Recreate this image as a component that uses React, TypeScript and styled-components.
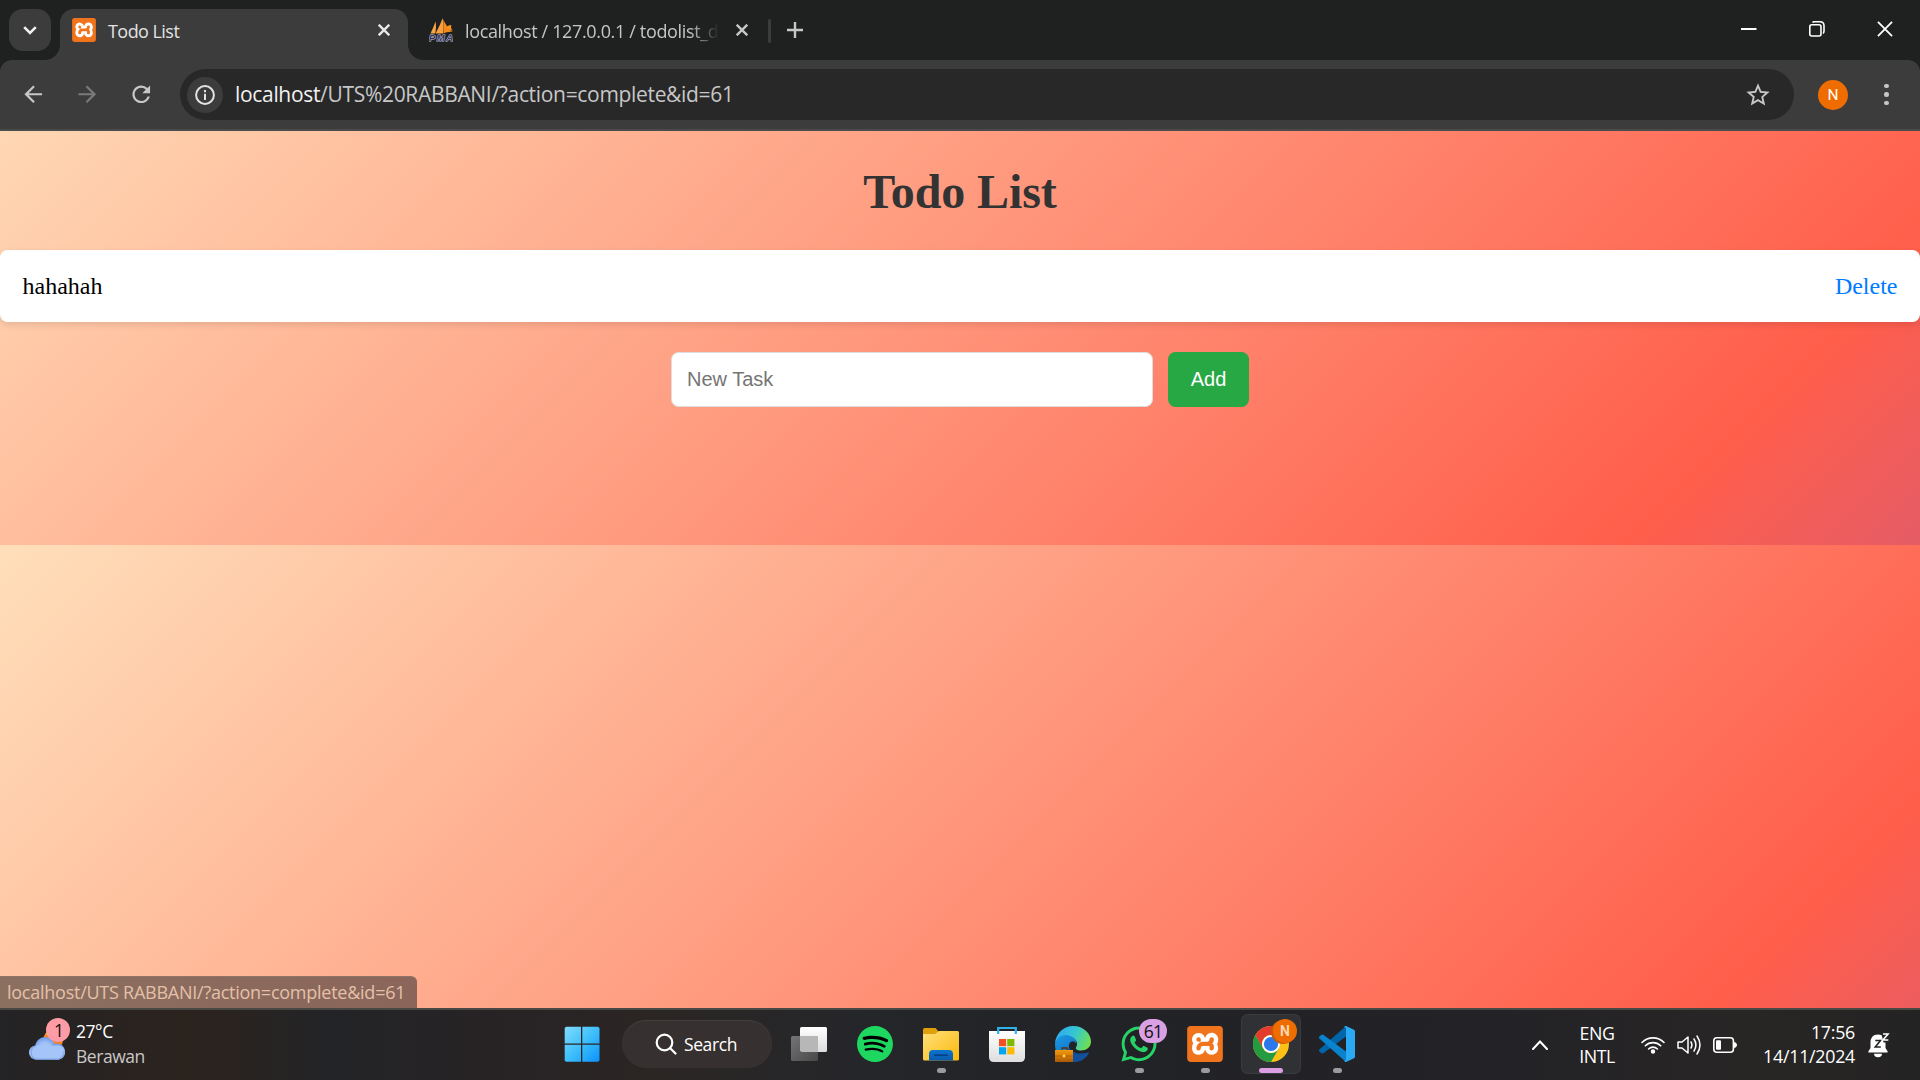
import React from "react";
import styled, { createGlobalStyle, css } from "styled-components";
import { SiXampp, SiSpotify } from "react-icons/si";
import { FaWhatsapp } from "react-icons/fa";
import { MdRefresh, MdArrowBack, MdArrowForward, MdStarBorder } from "react-icons/md";

const GlobalStyle = createGlobalStyle`
  * { box-sizing: border-box; }
  body { margin: 0; background: #242325; }
`;

const uiFont = css`
  font-family: "Open Sans", "Noto Sans", sans-serif;
  white-space: nowrap;
`;

const Screen = styled.div`
  width: 1920px;
  height: 1080px;
  overflow: hidden;
  display: flex;
  flex-direction: column;
`;

/* ---------- browser chrome ---------- */

const TabStrip = styled.div`
  height: 60px;
  flex: none;
  display: flex;
  align-items: flex-start;
  padding: 9px 0 0 9px;
  background: #1f2120;
`;

const TabSearch = styled.button`
  width: 42px;
  height: 42px;
  padding: 0;
  border: 0;
  border-radius: 14px;
  background: #3c3c3c;
  display: grid;
  place-items: center;
`;

const Tab = styled.div<{ $active?: boolean }>`
  position: relative;
  height: 51px;
  width: ${(p) => (p.$active ? 348 : 358)}px;
  margin-left: ${(p) => (p.$active ? 9 : 0)}px;
  padding: 0 ${(p) => (p.$active ? 18 : 18)}px 9px ${(p) => (p.$active ? 12 : 21)}px;
  display: flex;
  align-items: center;
  border-radius: 14px 14px 0 0;
  background: ${(p) => (p.$active ? "#3c3c3c" : "transparent")};
  svg:last-child { flex: none; margin-left: auto; }

  &::before,
  &::after {
    content: "";
    display: ${(p) => (p.$active ? "block" : "none")};
    position: absolute;
    bottom: 0;
    width: 15px;
    height: 15px;
  }
  &::before {
    left: -15px;
    background: radial-gradient(circle at 0 0, transparent 14.5px, #3c3c3c 15.2px);
  }
  &::after {
    right: -15px;
    background: radial-gradient(circle at 100% 0, transparent 14.5px, #3c3c3c 15.2px);
  }
`;

const TabTitle = styled.span<{ $spacing: number; $fade?: boolean }>`
  ${uiFont}
  flex: none;
  margin-left: 12px;
  padding-top: 2px;
  font-size: 18px;
  line-height: 24px;
  letter-spacing: ${(p) => p.$spacing}px;
  color: ${(p) => (p.$fade ? "#c4c7c5" : "#e3e3e3")};
  ${(p) => p.$fade && "mask-image: linear-gradient(to right, #000 225px, transparent 254px);"}
`;

const TabDivider = styled.i`
  width: 3px;
  height: 24px;
  margin: 10px 16px 0 2px;
  border-radius: 2px;
  background: #3c3c3c;
`;

const NewTab = styled.div`
  margin-top: 13px;
  display: flex;
`;

const WindowControls = styled.div`
  margin-left: auto;
  margin-top: 12px;
  padding-right: 27px;
  display: flex;
  align-items: center;
  gap: 52px;
`;

const ToolbarBack = styled.div`
  flex: none;
  height: 71px;
  background: #1f2120;
`;

const Toolbar = styled.div`
  height: 71px;
  padding: 0 22px 0 21px;
  display: flex;
  align-items: center;
  border-radius: 12px 12px 0 0;
  border-bottom: 2px solid #4a4b4a;
  background: #3c3c3c;
`;

const NavButton = styled.span<{ $dim?: boolean }>`
  width: 24px;
  height: 24px;
  margin-right: 30px;
  display: flex;
  align-items: center;
  justify-content: center;
  font-size: 26.5px;
  color: ${(p) => (p.$dim ? "#7a7a7a" : "#c7c7c7")};
  svg { flex: none; }
`;

const Omnibox = styled.div`
  width: 1614px;
  height: 51px;
  margin-left: -3px;
  padding: 0 22px 0 7px;
  display: flex;
  align-items: center;
  border-radius: 26px;
  background: #282828;
`;

const SiteInfo = styled.span`
  width: 36px;
  height: 36px;
  border-radius: 50%;
  display: grid;
  place-items: center;
  background: #3c3c3c;
`;

const Url = styled.span`
  ${uiFont}
  flex: 1;
  margin: 0 0 2px 12px;
  font-size: 21px;
  line-height: 28px;
  letter-spacing: -0.32px;
  color: #c7c7c7;
  b { font-weight: 400; color: #f1f1f1; }
`;

const Avatar = styled.span`
  width: 30px;
  height: 30px;
  margin-left: 24px;
  border-radius: 50%;
  display: grid;
  place-items: center;
  background: #ef6c00;
  color: #fff;
  font: 15.5px Roboto, sans-serif;
`;

const Menu = styled.span`
  margin-left: auto;
  margin-right: 9px;
  display: grid;
  gap: 4px;
  i { width: 4.6px; height: 4.6px; border-radius: 50%; background: #c7c7c7; }
`;

/* ---------- todo page ---------- */

const Page = styled.main`
  position: relative;
  flex: none;
  height: 877px;
  padding-top: 33px;
  background: linear-gradient(135deg, #ffdfba 0%, #ff5e4b 88.2%, #e55c66 100%) 0 -133px / 100% 547px repeat-y;
  font-family: "Liberation Serif", "Times New Roman", serif;
`;

const Heading = styled.h1`
  margin: 0 0 31px;
  font-size: 48px;
  line-height: 55px;
  letter-spacing: -0.1px;
  text-align: center;
  color: #333;
`;

const TaskItem = styled.div`
  height: 72px;
  padding: 0 22.5px;
  display: flex;
  align-items: center;
  justify-content: space-between;
  border-radius: 7.5px;
  background: #fff;
  box-shadow: 0 3px 7.5px rgba(0, 0, 0, 0.1);
  font-size: 24px;
  color: #000;
  a { color: #007bff; text-decoration: none; }
`;

const TaskForm = styled.form`
  margin-top: 30px;
  display: flex;
  justify-content: center;
  gap: 15px;
`;

const TaskInput = styled.input`
  width: 482px;
  height: 55px;
  padding: 0 15px;
  border: 1px solid #ddd;
  border-radius: 7.5px;
  background: #fff;
  font: 20px "Liberation Sans", Arial, sans-serif;
  &::placeholder { color: #757575; }
`;

const AddButton = styled.button`
  width: 81px;
  height: 55px;
  padding: 0;
  border: 0;
  border-radius: 7.5px;
  background: #28a745;
  color: #fff;
  font: 20px "Liberation Sans", Arial, sans-serif;
`;

const StatusBubble = styled.div`
  ${uiFont}
  position: absolute;
  left: 0;
  bottom: 0;
  width: 417px;
  height: 32px;
  padding-left: 7px;
  border-top-right-radius: 6px;
  border-top: 1px solid #8f7467;
  background: linear-gradient(to right, #8b7060, #8b655a);
  font-size: 18px;
  line-height: 31px;
  letter-spacing: -0.25px;
  color: #e4c0a9;
`;

/* ---------- taskbar ---------- */

const Taskbar = styled.footer`
  flex: none;
  height: 72px;
  display: flex;
  border-top: 2px solid #4a4845;
  background: linear-gradient(
    to right,
    #242325 0, #2c231e 190px, #232427 330px, #282325 520px, #2b2624 650px,
    #25262a 860px, #222327 1100px, #232226 1500px, #282625 1750px, #242323 1920px
  );
  color: #fff;
`;

const Weather = styled.div`
  ${uiFont}
  width: 549px;
  padding: 9px 0 0 29px;
  display: flex;
  gap: 11px;
  font-size: 17.5px;
  line-height: 24px;
`;

const WeatherText = styled.div`
  display: flex;
  flex-direction: column;
  gap: 0.5px;
  letter-spacing: -0.45px;
  span:last-child { color: #c9c7c6; }
`;

const WeatherIcon = styled.div`
  position: relative;
  width: 36px;
  padding-top: 8px;
`;

const Badge = styled.span<{ $kind: "weather" | "chat" | "profile" }>`
  ${uiFont}
  position: absolute;
  display: grid;
  place-items: center;
  height: 24px;
  line-height: 24px;
  border-radius: 12px;
  font-size: 17.5px;
  color: #111;
  ${(p) => p.$kind === "weather" && "left: 17px; top: -1px; width: 24px; padding-left: 2px; background: #ff9ba5;"}
  ${(p) => p.$kind === "chat" && "left: 30px; top: 5px; width: 28px; background: #d9a0e4; letter-spacing: -0.7px;"}
  ${(p) =>
    p.$kind === "profile" &&
    "left: 32px; top: 5px; width: 24px; background: #ef6c00; color: #ffd6b0; font: bold 14px Roboto, sans-serif; box-shadow: -2px 1px 0 #c95c08;"}
`;

const AppSlot = styled.div<{ $active?: boolean; $running?: boolean }>`
  position: relative;
  width: 60px;
  height: 60px;
  margin: 4px 3px 0;
  padding: 12px;
  border-radius: 7px;
  ${(p) => p.$active && "background: #303135; box-shadow: inset 0 0 0 1px #3a3b3f;"}
  svg { display: block; }

  &::after {
    content: "";
    display: ${(p) => (p.$active || p.$running ? "block" : "none")};
    width: ${(p) => (p.$active ? 24 : 9)}px;
    height: 5px;
    margin: 6px auto 0;
    border-radius: 3px;
    background: ${(p) => (p.$active ? "#dc9fe6" : "#9b9b9d")};
  }
`;

const SearchPill = styled.div`
  ${uiFont}
  width: 150px;
  height: 48px;
  margin: 10px 4px 0 7px;
  padding-left: 33px;
  display: flex;
  align-items: center;
  gap: 7px;
  border-radius: 24px;
  background: #363130;
  box-shadow: inset 0 1px 0 #423e3c;
  font-size: 17.5px;
  letter-spacing: -0.4px;
`;

const Knot = styled.span<{ $size: number }>`
  flex: none;
  width: ${(p) => p.$size}px;
  height: ${(p) => p.$size}px;
  display: block;
  border-radius: ${(p) => p.$size / 8}px;
  background: linear-gradient(#fff, #fff) center / 82% 72% no-repeat;
  color: #f0741c;
  svg { display: block; width: 100%; height: 100%; }
`;

const Tray = styled.div`
  ${uiFont}
  margin-left: auto;
  padding-right: 30px;
  height: 70px;
  display: flex;
  align-items: center;
  font-size: 17.8px;
  line-height: 24px;
`;

const Language = styled.div`
  width: 40px;
  margin: 0 24px 0 29px;
  text-align: center;
  line-height: 23px;
  letter-spacing: -0.45px;
`;

const TrayIcons = styled.div`
  display: flex;
  align-items: center;
  gap: 12px;
`;

const Clock = styled.div`
  width: 118px;
  margin: 0 13px 3px 0;
  display: flex;
  flex-direction: column;
  text-align: right;
  letter-spacing: -0.25px;
`;

/* ---------- drawings ---------- */

const Cross = ({ size, color, w }: { size: number; color: string; w: number }) => (
  <svg width={size} height={size} viewBox="0 0 12 12" fill="none" stroke={color} strokeWidth={(w * 12) / size}>
    <path d="M.7.7l10.6 10.6M11.3.7L.7 11.3" />
  </svg>
);

const SailIcon = () => (
  <svg width="24" height="24" viewBox="0 0 24 24">
    <path d="M1.500 15.500C3 12 5 8 6.500 3.500c.8 4 .6 8-.3 12z" fill="#f7a545" />
    <path d="M6.500 15.500C9.500 10 12 5 13.500 0c1.200 5 1.200 10.500.5 15.500z" fill="#f9a03c" />
    <path d="M14.300 1.500c1.700 4 5.200 9 9.200 12.500-3-.6-6.500.5-9 1.500z" fill="#f08a1c" />
    <path d="M17 10c1-2 3-2.800 5.500-3-1 2-.5 4 1.500 6z" fill="#f7931e" />
    <text x="0" y="23.300" fontSize="9.500" fontWeight="700" fontStyle="italic" fontFamily="Liberation Sans, sans-serif" fill="#34345c" stroke="#c3c3de" strokeWidth="1" paintOrder="stroke" textLength="24">PMA</text>
  </svg>
);

const CloudIcon = () => (
  <svg width="36" height="34" viewBox="0 0 36 34">
    <defs>
      <radialGradient id="cl" cx=".5" cy=".62" r=".6">
        <stop offset="0" stopColor="#b4d0fa" />
        <stop offset=".6" stopColor="#9dbef5" />
        <stop offset="1" stopColor="#6f9ae8" />
      </radialGradient>
    </defs>
    <circle cx="24" cy="13" r="10" fill="#f58220" />
    <path d="M16 8c2-5 6-5 9-3z" fill="#fbbf1d" />
    <circle cx="16" cy="20" r="10" fill="url(#cl)" />
    <circle cx="28" cy="24.500" r="8" fill="url(#cl)" />
    <rect x="0" y="18.500" width="36" height="14" rx="7" fill="#a5c4f7" />
    <path d="M7 18.800a7 7 0 000 13.400h22a7.200 7.200 0 006-8" fill="none" stroke="#7da5ea" strokeWidth="1.200" />
  </svg>
);

const WindowsIcon = () => (
  <svg width="36" height="36" viewBox="0 0 36 36">
    <defs>
      <linearGradient id="win" x1="0" y1="0" x2="36" y2="36" gradientUnits="userSpaceOnUse">
        <stop offset="0" stopColor="#84dcfb" />
        <stop offset=".5" stopColor="#3fc0fb" />
        <stop offset="1" stopColor="#0a91fb" />
      </linearGradient>
    </defs>
    <path fill="url(#win)" d="M2 .7h15v16.800H.7V2zM18.300.7H34L35.500 2v15.500H18.300zM.7 18.700H17v17H2l-1.300-1.300zM18.300 18.700h17.200v15.700l-1.500 1.300H18.300z" />
  </svg>
);

const TaskViewIcon = () => (
  <svg width="36" height="36" viewBox="0 0 36 36">
    <defs>
      <linearGradient id="tv" x1="0" y1="0" x2="1" y2="1">
        <stop offset="0" stopColor="#757575" />
        <stop offset="1" stopColor="#484848" />
      </linearGradient>
      <linearGradient id="tw" x1="0" y1="0" x2="0" y2="1">
        <stop offset="0" stopColor="#fff" />
        <stop offset="1" stopColor="#dcdcdc" />
      </linearGradient>
    </defs>
    <rect x="9" y="1" width="27" height="25" rx="1.500" fill="url(#tw)" />
    <rect x="0" y="10" width="27" height="25" rx="1.500" fill="url(#tv)" />
    <path d="M9 10h18v16H10.500L9 24.500z" fill="#b7b7b7" />
  </svg>
);

const SpotifyDisc = styled.span`
  display: block;
  width: 36px;
  height: 36px;
  border-radius: 50%;
  background: radial-gradient(circle, #000 62%, transparent 64%);
  color: #1ed760;
`;

const FolderIcon = () => (
  <svg width="36" height="36" viewBox="0 0 36 36">
    <defs>
      <linearGradient id="fo" x1="0" y1="0" x2="1" y2="1">
        <stop offset="0" stopColor="#ffe07c" />
        <stop offset="1" stopColor="#fbb90b" />
      </linearGradient>
      <linearGradient id="fb" x1="0" y1="0" x2="0" y2="1">
        <stop offset="0" stopColor="#0a74cc" />
        <stop offset="1" stopColor="#0a5cae" />
      </linearGradient>
    </defs>
    <path d="M0 3.500Q0 2 1.500 2h11l3 3.500V12H0z" fill="#dfa00c" />
    <path d="M0 8h12l4-3h18.500Q36 5 36 6.500V33q0 1.500-1.500 1.500h-33Q0 34.500 0 33z" fill="url(#fo)" />
    <path d="M6 34.500V28q0-4 4-4h16q4 0 4 4v6.500z" fill="url(#fb)" />
    <path d="M11 29.200h14" stroke="#063f84" strokeWidth="1.600" />
  </svg>
);

const StoreIcon = () => (
  <svg width="36" height="36" viewBox="0 0 36 36">
    <defs>
      <linearGradient id="st" x1="0" y1="0" x2="0" y2="1">
        <stop offset="0" stopColor="#fff" />
        <stop offset="1" stopColor="#dedede" />
      </linearGradient>
    </defs>
    <path d="M0 5h36v26q0 5-5 5H5q-5 0-5-5z" fill="url(#st)" />
    <path d="M9.200 8V2h17.600v6" fill="none" stroke="#2eb2ec" strokeWidth="2.200" />
    <path d="M10 13h7.200v7.200H10z" fill="#f25022" />
    <path d="M18.200 13h7.200v7.200h-7.200z" fill="#7fba00" />
    <path d="M10 21.200h7.200v7.200H10z" fill="#00a4ef" />
    <path d="M18.200 21.200h7.200v7.200h-7.200z" fill="#ffb900" />
  </svg>
);

const EdgeIcon = () => (
  <svg width="36" height="36" viewBox="0 0 36 36">
    <defs>
      <linearGradient id="e1" x1="0" y1=".3" x2="1" y2=".6">
        <stop offset="0" stopColor="#2fa8f0" />
        <stop offset=".5" stopColor="#35c6d4" />
        <stop offset="1" stopColor="#6fe04c" />
      </linearGradient>
      <linearGradient id="e2" x1="0" y1="0" x2=".7" y2="1">
        <stop offset="0" stopColor="#1e9be8" />
        <stop offset="1" stopColor="#0b62b8" />
      </linearGradient>
      <linearGradient id="br" x1="0" y1="0" x2="0" y2="1">
        <stop offset="0" stopColor="#f09a12" />
        <stop offset=".5" stopColor="#d77a08" />
        <stop offset="1" stopColor="#a75a08" />
      </linearGradient>
    </defs>
    <path d="M0 19C0 11 6 7.500 11 8.500c7 1 11 5.500 10 9-3-5-8-1-7 4 1 6 7 8 12 7l8-2C31 33 25 36 18 36 8 36 0 29 0 19z" fill="url(#e2)" />
    <path d="M14 21c2 6 10 8 19.500 5.500C31 32 25 36 18 36c-5-2-7-9-4-15z" fill="#124f9c" />
    <path d="M0 17C1 7 9 0 18 0c11 0 18 8 18 15.500 0 6-5 9-10 9-4 0-6-1.500-5-3 2.500-4 .5-9-6-11.500C9 7.500 3 10.500 0 17z" fill="url(#e1)" />
    <path d="M7 24v-2h5v2" fill="none" stroke="#5b3209" strokeWidth="1.300" />
    <path d="M0 24h18v12H0z" fill="url(#br)" />
    <path d="M0 30h18" stroke="#a35c08" strokeWidth=".8" />
    <circle cx="9" cy="30" r="1.400" fill="#ffdb45" />
  </svg>
);

const ChromeIcon = () => (
  <svg width="36" height="36" viewBox="0 0 36 36">
    <circle cx="18" cy="18" r="18" fill="#fbc116" />
    <path d="M2.400 9A18 18 0 0133.600 9H18a9 9 0 00-7.800 13.500z" fill="#e33b2e" />
    <path d="M2.400 9A18 18 0 0018 36l7.800-13.500A9 9 0 0110.200 22.500z" fill="#249a41" />
    <circle cx="18" cy="18" r="9" fill="#fff" />
    <circle cx="18" cy="18" r="7.100" fill="#2a78ea" />
  </svg>
);

const CodeIcon = () => (
  <svg width="36" height="36" viewBox="0 0 36 36">
    <path d="M27 0v10.500L4.300 27.200q-1 .6-1.800 0L.4 25.400q-.8-.9 0-1.800z" fill="#0065a9" />
    <path d="M27 36V25.500L4.300 8.800q-1-.6-1.800 0L.4 10.600q-.8.900 0 1.800z" fill="#0a83cf" />
    <path d="M27 36q-1.200 0-2-1l2-1V2l-2-1q.8-1 2-1l7.500 3.500Q36 4.200 36 5.500v25q0 1.300-1.500 2z" fill="#2aaaf3" />
  </svg>
);

const WifiIcon = () => (
  <svg width="24" height="18" viewBox="0 0 24 18" fill="none" stroke="#fff" strokeWidth="1.600" strokeLinecap="round">
    <path d="M1 6.500a15.500 15.500 0 0122 0M4.300 9.800a10.900 10.900 0 0115.400 0M7.600 13a6.200 6.200 0 018.800 0" />
    <circle cx="12" cy="15.500" r="1.400" fill="#fff" />
  </svg>
);

const SpeakerIcon = () => (
  <svg width="24" height="22" viewBox="0 0 24 22" fill="none" stroke="#fff" strokeWidth="1.500" strokeLinecap="round" strokeLinejoin="round">
    <path d="M1 8h4l6-5v16l-6-5H1z" />
    <path d="M14 8q1.800 3 0 6M17 5q3.800 6 0 12M20 2q6 9 0 18" />
  </svg>
);

const BatteryIcon = () => (
  <svg width="24" height="18" viewBox="0 0 24 18">
    <rect x=".8" y="1.800" width="19.600" height="14.400" rx="3" fill="none" stroke="#fff" strokeWidth="1.600" />
    <rect x="3" y="4.200" width="5" height="9.600" rx="1" fill="#fff" />
    <path d="M21.500 6.500q2 .4 2 2.500t-2 2.500z" fill="#fff" stroke="#fff" />
  </svg>
);

const BellIcon = () => (
  <svg width="22" height="26" viewBox="0 0 22 26">
    <path d="M10 2.500c-5 0-7.500 3.500-7.500 8V16L.3 19.500q-.3.900.7.900h18q1 0 .7-.9L17.500 16v-5.500c0-4.500-2.500-8-7.500-8z" fill="#fff" />
    <path d="M6 21.800h8a4 3.400 0 01-8 0z" fill="#fff" />
    <path d="M7.300 8.500h5.200l-5.200 6.500h5.500" fill="none" stroke="#262525" strokeWidth="1.600" />
    <path d="M13 0h9v10.500h-6.500z" fill="#272525" />
    <path d="M15 2h5l-5 6h5.300" fill="none" stroke="#fff" strokeWidth="1.600" />
  </svg>
);

export default function App() {
  return (
    <Screen>
      <GlobalStyle />
      <TabStrip>
        <TabSearch aria-label="Search tabs">
          <svg width="14" height="9" viewBox="0 0 14 9" fill="none" stroke="#f0f0f0" strokeWidth="2.600">
            <path d="M1.200 1.200L7 7l5.800-5.800" />
          </svg>
        </TabSearch>
        <Tab $active>
          <Knot $size={24}><SiXampp /></Knot>
          <TabTitle $spacing={-0.55}>Todo List</TabTitle>
          <Cross size={12} color="#e8e8e8" w={2.4} />
        </Tab>
        <Tab>
          <SailIcon />
          <TabTitle $spacing={-0.35} $fade>localhost / 127.0.0.1 / todolist_d</TabTitle>
          <Cross size={12} color="#c7c7c7" w={2.4} />
        </Tab>
        <TabDivider />
        <NewTab>
          <svg width="16" height="16" viewBox="0 0 16 16" stroke="#c7c7c7" strokeWidth="2.400">
            <path d="M8 0v16M0 8h16" />
          </svg>
        </NewTab>
        <WindowControls>
          <svg width="16" height="16" viewBox="0 0 16 16"><path d="M0 8h15.500" stroke="#fff" strokeWidth="2" /></svg>
          <svg width="16" height="16" viewBox="0 0 16 16" fill="none" stroke="#fff" strokeWidth="1.600">
            <rect x=".8" y="3.800" width="11.200" height="11.200" rx="2" />
            <path d="M3.500 1.500Q4 .8 5.500.8H11q4 0 4 4V10q0 1.700-1 2.500" />
          </svg>
          <Cross size={16} color="#fff" w={1.8} />
        </WindowControls>
      </TabStrip>
      <ToolbarBack>
        <Toolbar>
          <NavButton><MdArrowBack /></NavButton>
          <NavButton $dim><MdArrowForward /></NavButton>
          <NavButton><MdRefresh /></NavButton>
          <Omnibox>
            <SiteInfo>
              <svg width="20" height="20" viewBox="0 0 20 20" fill="none" stroke="#e3e3e3" strokeWidth="2">
                <circle cx="10" cy="10" r="8.900" />
                <path d="M10 8.700V15M10 5v2.200" />
              </svg>
            </SiteInfo>
            <Url><b>localhost</b>/UTS%20RABBANI/?action=complete&amp;id=61</Url>
            <MdStarBorder size={28} color="#c7c7c7" />
          </Omnibox>
          <Avatar>N</Avatar>
          <Menu><i /><i /><i /></Menu>
        </Toolbar>
      </ToolbarBack>

      <Page>
        <Heading>Todo List</Heading>
        <TaskItem>
          <span>hahahah</span>
          <a>Delete</a>
        </TaskItem>
        <TaskForm>
          <TaskInput placeholder="New Task" />
          <AddButton type="button">Add</AddButton>
        </TaskForm>
        <StatusBubble>localhost/UTS RABBANI/?action=complete&amp;id=61</StatusBubble>
      </Page>

      <Taskbar>
        <Weather>
          <WeatherIcon>
            <CloudIcon />
            <Badge $kind="weather">1</Badge>
          </WeatherIcon>
          <WeatherText>
            <span>27°C</span>
            <span>Berawan</span>
          </WeatherText>
        </Weather>
        <AppSlot><WindowsIcon /></AppSlot>
        <SearchPill>
          <svg width="22" height="22" viewBox="0 0 22 22" fill="none" stroke="#fff" strokeWidth="2.200" strokeLinecap="round">
            <circle cx="9.500" cy="9.500" r="7.800" />
            <path d="M15.200 15.200l5.300 5.300" />
          </svg>
          Search
        </SearchPill>
        <AppSlot><TaskViewIcon /></AppSlot>
        <AppSlot><SpotifyDisc><SiSpotify size={36} /></SpotifyDisc></AppSlot>
        <AppSlot $running><FolderIcon /></AppSlot>
        <AppSlot><StoreIcon /></AppSlot>
        <AppSlot><EdgeIcon /></AppSlot>
        <AppSlot $running>
          <FaWhatsapp size={40} color="#25d366" style={{ margin: "-2px" }} />
          <Badge $kind="chat">61</Badge>
        </AppSlot>
        <AppSlot $running><Knot $size={36}><SiXampp /></Knot></AppSlot>
        <AppSlot $active>
          <ChromeIcon />
          <Badge $kind="profile">N</Badge>
        </AppSlot>
        <AppSlot $running><CodeIcon /></AppSlot>
        <Tray>
          <svg width="16" height="10" viewBox="0 0 16 10" fill="none" stroke="#fff" strokeWidth="2" strokeLinecap="round">
            <path d="M1 9l7-7.500L15 9" />
          </svg>
          <Language>ENG<br />INTL</Language>
          <TrayIcons>
            <WifiIcon />
            <SpeakerIcon />
            <BatteryIcon />
          </TrayIcons>
          <Clock>
            <span>17:56</span>
            <span>14/11/2024</span>
          </Clock>
          <BellIcon />
        </Tray>
      </Taskbar>
    </Screen>
  );
}
